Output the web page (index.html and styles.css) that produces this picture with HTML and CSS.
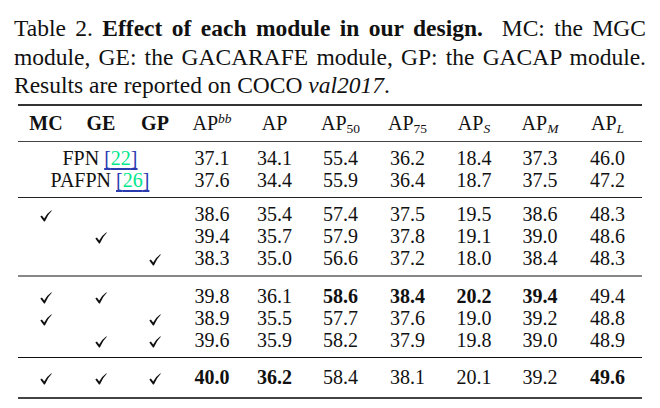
FILE: index.html
```html
<!DOCTYPE html>
<html>
<head>
<meta charset="utf-8">
<link rel="stylesheet" href="styles.css">
</head>
<body>
<div class="page">
  <p class="caption">
    <span class="line">Table 2. <b>Effect of each module in our design.</b>&nbsp; MC: the MGC</span>
    <span class="line">module, GE: the GACARAFE module, GP: the GACAP module.</span>
    <span class="line last">Results are reported on COCO <i>val2017</i>.</span>
  </p>
  <table class="results">
    <colgroup>
      <col class="c-mc"><col class="c-ge"><col class="c-gp"><col class="c-bb"><col class="c-ap">
      <col class="c-50"><col class="c-75"><col class="c-s"><col class="c-m"><col class="c-l">
    </colgroup>
    <thead>
      <tr>
        <th class="bold">MC</th><th class="bold">GE</th><th class="bold">GP</th>
        <th>AP<sup><i>bb</i></sup></th><th>AP</th><th>AP<sub>50</sub></th><th>AP<sub>75</sub></th>
        <th>AP<sub><i>S</i></sub></th><th>AP<sub><i>M</i></sub></th><th>AP<sub><i>L</i></sub></th>
      </tr>
    </thead>
    <tbody class="b-base">
      <tr><td colspan="3">FPN <a class="cite"><span class="br">[</span>22<span class="br">]</span></a></td><td>37.1</td><td>34.1</td><td>55.4</td><td>36.2</td><td>18.4</td><td>37.3</td><td>46.0</td></tr>
      <tr><td colspan="3">PAFPN <a class="cite"><span class="br">[</span>26<span class="br">]</span></a></td><td>37.6</td><td>34.4</td><td>55.9</td><td>36.4</td><td>18.7</td><td>37.5</td><td>47.2</td></tr>
    </tbody>
    <tbody class="b-single">
      <tr><td><svg class="ck" viewBox="0 0 12 12"><path d="M0.3 6.6 L1.9 5.4 L4.2 8.6 Q6.6 3.6 11.4 0.3 L11.8 0.8 Q7.6 4.8 4.9 11.4 L4 11.4 Z"/></svg></td><td></td><td></td><td>38.6</td><td>35.4</td><td>57.4</td><td>37.5</td><td>19.5</td><td>38.6</td><td>48.3</td></tr>
      <tr><td></td><td><svg class="ck" viewBox="0 0 12 12"><path d="M0.3 6.6 L1.9 5.4 L4.2 8.6 Q6.6 3.6 11.4 0.3 L11.8 0.8 Q7.6 4.8 4.9 11.4 L4 11.4 Z"/></svg></td><td></td><td>39.4</td><td>35.7</td><td>57.9</td><td>37.8</td><td>19.1</td><td>39.0</td><td>48.6</td></tr>
      <tr><td></td><td></td><td><svg class="ck" viewBox="0 0 12 12"><path d="M0.3 6.6 L1.9 5.4 L4.2 8.6 Q6.6 3.6 11.4 0.3 L11.8 0.8 Q7.6 4.8 4.9 11.4 L4 11.4 Z"/></svg></td><td>38.3</td><td>35.0</td><td>56.6</td><td>37.2</td><td>18.0</td><td>38.4</td><td>48.3</td></tr>
    </tbody>
    <tbody class="b-pair">
      <tr><td><svg class="ck" viewBox="0 0 12 12"><path d="M0.3 6.6 L1.9 5.4 L4.2 8.6 Q6.6 3.6 11.4 0.3 L11.8 0.8 Q7.6 4.8 4.9 11.4 L4 11.4 Z"/></svg></td><td><svg class="ck" viewBox="0 0 12 12"><path d="M0.3 6.6 L1.9 5.4 L4.2 8.6 Q6.6 3.6 11.4 0.3 L11.8 0.8 Q7.6 4.8 4.9 11.4 L4 11.4 Z"/></svg></td><td></td><td>39.8</td><td>36.1</td><td class="bold">58.6</td><td class="bold">38.4</td><td class="bold">20.2</td><td class="bold">39.4</td><td>49.4</td></tr>
      <tr><td><svg class="ck" viewBox="0 0 12 12"><path d="M0.3 6.6 L1.9 5.4 L4.2 8.6 Q6.6 3.6 11.4 0.3 L11.8 0.8 Q7.6 4.8 4.9 11.4 L4 11.4 Z"/></svg></td><td></td><td><svg class="ck" viewBox="0 0 12 12"><path d="M0.3 6.6 L1.9 5.4 L4.2 8.6 Q6.6 3.6 11.4 0.3 L11.8 0.8 Q7.6 4.8 4.9 11.4 L4 11.4 Z"/></svg></td><td>38.9</td><td>35.5</td><td>57.7</td><td>37.6</td><td>19.0</td><td>39.2</td><td>48.8</td></tr>
      <tr><td></td><td><svg class="ck" viewBox="0 0 12 12"><path d="M0.3 6.6 L1.9 5.4 L4.2 8.6 Q6.6 3.6 11.4 0.3 L11.8 0.8 Q7.6 4.8 4.9 11.4 L4 11.4 Z"/></svg></td><td><svg class="ck" viewBox="0 0 12 12"><path d="M0.3 6.6 L1.9 5.4 L4.2 8.6 Q6.6 3.6 11.4 0.3 L11.8 0.8 Q7.6 4.8 4.9 11.4 L4 11.4 Z"/></svg></td><td>39.6</td><td>35.9</td><td>58.2</td><td>37.9</td><td>19.8</td><td>39.0</td><td>48.9</td></tr>
    </tbody>
    <tbody class="b-full">
      <tr><td><svg class="ck" viewBox="0 0 12 12"><path d="M0.3 6.6 L1.9 5.4 L4.2 8.6 Q6.6 3.6 11.4 0.3 L11.8 0.8 Q7.6 4.8 4.9 11.4 L4 11.4 Z"/></svg></td><td><svg class="ck" viewBox="0 0 12 12"><path d="M0.3 6.6 L1.9 5.4 L4.2 8.6 Q6.6 3.6 11.4 0.3 L11.8 0.8 Q7.6 4.8 4.9 11.4 L4 11.4 Z"/></svg></td><td><svg class="ck" viewBox="0 0 12 12"><path d="M0.3 6.6 L1.9 5.4 L4.2 8.6 Q6.6 3.6 11.4 0.3 L11.8 0.8 Q7.6 4.8 4.9 11.4 L4 11.4 Z"/></svg></td><td class="bold">40.0</td><td class="bold">36.2</td><td>58.4</td><td>38.1</td><td>20.1</td><td>39.2</td><td class="bold">49.6</td></tr>
    </tbody>
  </table>
</div>
</body>
</html>
```

FILE: styles.css
```css
html, body {
  margin: 0;
  padding: 0;
  background: #ffffff;
}

.page {
  width: 660px;
  height: 408px;
  padding: 14px 14px 0 14px;
  box-sizing: border-box;
  font-family: "Liberation Serif", "Times New Roman", serif;
  color: #111111;
}

.caption {
  margin: 0;
  font-size: 23.5px;
  line-height: 28.5px;
}

.caption .line {
  display: block;
  text-align: justify;
  text-align-last: justify;
  white-space: nowrap;
}

.caption .line.last {
  text-align-last: left;
}

.results {
  margin: 4px 0 0 4px;
  width: 624px;
  table-layout: fixed;
  border-collapse: collapse;
  font-size: 20px;
  line-height: 22px;
  border-top: 2px solid #333333;
  border-bottom: 2px solid #444444;
}

.c-mc { width: 56px; }
.c-ge { width: 54px; }
.c-gp { width: 54px; }
.c-bb { width: 60px; }
.c-ap { width: 65px; }
.c-50 { width: 67px; }
.c-75 { width: 67px; }
.c-s  { width: 66px; }
.c-m  { width: 66px; }
.c-l  { width: 69px; }

.results th,
.results td {
  padding: 0;
  text-align: center;
  white-space: nowrap;
  font-weight: normal;
}

.results thead th {
  padding: 6px 0 7px;
}

.results .bold {
  font-weight: bold;
}

.results sup,
.results sub {
  font-size: 13.5px;
  line-height: 0;
}

.results sup {
  vertical-align: 7px;
}

.results sub {
  vertical-align: -3px;
}

.results tbody tr:first-child td {
  padding-top: 5px;
}

.results tbody tr:last-child td {
  padding-bottom: 6px;
}

.results .b-pair tr:first-child td {
  padding-top: 8px;
}

.results .b-full tr:first-child td {
  padding-top: 8px;
}

.results .b-full tr:last-child td {
  padding-bottom: 9px;
}

.b-base { border-top: 1px solid #444444; }
.b-single { border-top: 1px solid #222222; }
.b-pair { border-top: 2px solid #888888; }
.b-full { border-top: 1px solid #111111; }

.cite {
  color: #00e68a;
  text-decoration: underline;
  text-decoration-color: #2a3bb0;
  text-underline-offset: 3px;
}

.cite .br {
  color: #2a3bb0;
}

.ck {
  width: 12px;
  height: 12px;
  fill: #111111;
  vertical-align: -1px;
}
```
